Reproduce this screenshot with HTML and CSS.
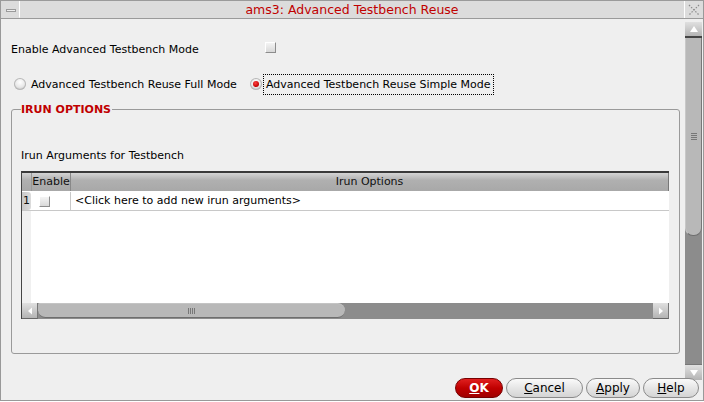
FILE: index.html
```html
<!DOCTYPE html>
<html>
<head>
<meta charset="utf-8">
<link rel="stylesheet" href="styles.css">
</head>
<body>
<div class="window">
  <div class="titlebar">
    <div class="tb-btn tb-menu"><span class="menu-bar"></span></div>
    <div class="title">ams3: Advanced Testbench Reuse</div>
    <div class="tb-btn tb-close">
      <svg width="14" height="14" viewBox="0 0 14 14"><path d="M2 2 L12 12 M12 2 L2 12" stroke="#8a8a8a" stroke-width="1.2" stroke-dasharray="1.5 1.5" fill="none"/></svg>
    </div>
  </div>
  <div class="middle">
    <div class="main">
      <div class="row row-enable">
        <span class="label">Enable Advanced Testbench Mode</span>
        <span class="check chk-main"></span>
      </div>
      <div class="row row-radio">
        <span class="radio"></span>
        <span class="label rl1">Advanced Testbench Reuse Full Mode</span>
        <span class="radio on"></span>
        <span class="label rl2 focus">Advanced Testbench Reuse Simple Mode</span>
      </div>
      <fieldset class="group">
        <legend>IRUN OPTIONS</legend>
        <div class="sub">Irun Arguments for Testbench</div>
        <div class="table">
          <div class="thead">
            <div class="rh corner"></div>
            <div class="th th-en">Enable</div>
            <div class="th th-opt">Irun Options</div>
          </div>
          <div class="trow">
            <div class="rh num">1</div>
            <div class="td td-en"><span class="check"></span></div>
            <div class="td td-opt">&lt;Click here to add new irun arguments&gt;</div>
          </div>
          <div class="tbody-empty">
            <div class="rh blank"></div>
            <div class="fill"></div>
          </div>
          <div class="hscroll">
            <div class="sbtn sbtn-left"><svg width="8" height="8" viewBox="0 0 8 8"><path d="M2 4 L6 0.5 L6 7.5 Z" fill="#fff"/></svg></div>
            <div class="hthumb"><span class="grip-h"></span></div>
            <div class="htrack"></div>
            <div class="sbtn sbtn-right"><svg width="8" height="8" viewBox="0 0 8 8"><path d="M6 4 L2 0.5 L2 7.5 Z" fill="#fff"/></svg></div>
          </div>
        </div>
      </fieldset>
    </div>
    <div class="vscroll">
      <div class="vbtn vbtn-up"><svg width="10" height="8" viewBox="0 0 10 8"><path d="M5 1 L9 7 L1 7 Z" fill="#fff"/></svg></div>
      <div class="vthumb"><span class="grip-v"></span></div>
      <div class="vtrack"></div>
      <div class="vbtn vbtn-down"><svg width="10" height="8" viewBox="0 0 10 8"><path d="M5 7 L9 1 L1 1 Z" fill="#fff"/></svg></div>
    </div>
  </div>
  <div class="footer">
    <button class="btn ok"><u>O</u>K</button>
    <button class="btn cancel"><u>C</u>ancel</button>
    <button class="btn apply"><u>A</u>pply</button>
    <button class="btn help"><u>H</u>elp</button>
  </div>
</div>
</body>
</html>
```
FILE: styles.css
```css
* { box-sizing: border-box; }
html, body { margin: 0; padding: 0; }
body {
  width: 704px;
  height: 402px;
  overflow: hidden;
  font-family: "DejaVu Sans", "Liberation Sans", sans-serif;
  font-size: 11px;
  color: #000;
  background: #fff;
}
.window {
  width: 704px;
  height: 401px;
  border: 1px solid #999;
  border-top: 1px solid #9a9a9a;
  background: #efefef;
  display: flex;
  flex-direction: column;
}
.titlebar {
  height: 18px;
  background: #dcdcdc;
  border-bottom: 1px solid #9a9a9a;
  display: flex;
  align-items: stretch;
  flex: none;
}
.tb-btn {
  width: 18px;
  flex: none;
  display: flex;
  align-items: center;
  justify-content: center;
}
.tb-menu {
  margin-left: 1px;
  border-right: 1px solid #fff;
  border-bottom: 1px solid #dcdcdc;
}
.menu-bar {
  width: 10px;
  height: 3px;
  border: 1px solid #9a9a9a;
  background: #eee;
  margin-top: 2px;
}
.tb-close {
  border-left: 1px solid #fff;
  margin-right: 1px;
}
.title {
  flex: 1;
  text-align: center;
  color: #c00000;
  font-size: 12.5px;
  line-height: 17px;
  padding-left: 0;
}
.middle {
  flex: none;
  height: 359px;
  display: flex;
}
.main {
  flex: 1;
  padding: 21px 5px 0 10px;
}
.row {
  display: flex;
  align-items: center;
  height: 18px;
}
.row-enable .label { width: 254px; }
.check {
  display: inline-block;
  width: 11px;
  height: 11px;
  border: 1px solid;
  border-color: #fff #8c8c8c #8c8c8c #fff;
  background: linear-gradient(#f4f4f4, #d8d8d8);
}
.chk-main { margin-top: -4px; }
.row-radio {
  margin-top: 16px;
  height: 20px;
}
.radio {
  width: 12px;
  height: 12px;
  border-radius: 50%;
  flex: none;
  background: radial-gradient(circle at 50% 35%, #ffffff 0%, #e8e8e8 50%, #a8a8a8 100%);
  box-shadow: inset 0 0 0 1px #b8b8b8;
  margin-left: 3px;
  margin-right: 5px;
  position: relative;
}
.radio.on::after {
  content: "";
  position: absolute;
  left: 3px; top: 3px;
  width: 6px; height: 6px;
  border-radius: 50%;
  background: radial-gradient(circle at 40% 35%, #ff4040, #c00000 70%);
}
.rl1 { margin-right: 10px; }
.rl2 { margin-left: -3px; }
.focus {
  outline: 1px dotted #000;
  padding: 2px 2px;
  line-height: 15px;
}
.group {
  margin: 9px 0 0 0;
  padding: 0 9px 0 9px;
  border: 1px solid #9a9a9a;
  border-radius: 3px;
  height: 251px;
  width: 669px;
}
.group legend {
  color: #c00000;
  font-weight: bold;
  font-size: 11px;
  padding: 0 1px 0 0;
  margin-left: 0;
  line-height: 13px;
}
.sub {
  margin-top: 32px;
  height: 16px;
  line-height: 16px;
}
.table {
  margin-top: 7px;
  width: 648px;
  height: 148px;
  background: #fff;
  border-left: 1px solid #444;
  border-top: 2px solid #3a3a3a;
  display: flex;
  flex-direction: column;
}
.thead {
  height: 19px;
  display: flex;
  flex: none;
  background: linear-gradient(#d4d4d4, #b0b0b0 40%, #a8a8a8);
  border-bottom: 1px solid #fff;
}
.rh {
  width: 9px;
  flex: none;
}
.corner { background: transparent; }
.th {
  line-height: 18px;
  color: #111;
}
.th-en {
  width: 40px;
  text-align: center;
  border-right: 1px solid #888;
  border-left: 1px solid #999;
}
.th-opt {
  flex: 1;
  text-align: center;
  border-right: 1px solid #777;
}
.trow {
  height: 19px;
  display: flex;
  flex: none;
  border-bottom: 1px solid #c8c8c8;
}
.num {
  background: linear-gradient(90deg, #c8c8c8, #dcdcdc);
  border-radius: 0 3px 3px 0;
  line-height: 18px;
  font-size: 11px;
  text-align: left;
  padding-left: 1px;
  color: #111;
}
.td { line-height: 18px; }
.td-en {
  width: 40px;
  border-right: 1px solid #c8c8c8;
  display: flex;
  align-items: center;
  padding-left: 8px;
}
.td-opt {
  flex: 1;
  padding-left: 4px;
}
.tbody-empty {
  flex: 1;
  display: flex;
}
.blank { background: #f0f0f0; }
.fill { flex: 1; background: #fff; }
.hscroll {
  height: 16px;
  flex: none;
  display: flex;
  background: #8c8c8c;
}
.sbtn {
  width: 16px;
  height: 16px;
  flex: none;
  background: linear-gradient(#e0e0e0, #b4b4b4);
  border-right: 1px solid #777;
  border-bottom: 1px solid #666;
  display: flex;
  align-items: center;
  justify-content: center;
}
.hthumb {
  width: 307px;
  flex: none;
  height: 15px;
  margin-top: 0;
  background: #b8b8b8;
  border-radius: 2px 8px 8px 8px;
  border-bottom: 1px solid #6e6e6e;
  border-top: 1px solid #c4c4c4;
  display: flex;
  align-items: center;
  justify-content: center;
}
.grip-h {
  width: 8px;
  height: 6px;
  background: repeating-linear-gradient(90deg, #777 0 1px, transparent 1px 2px);
}
.htrack { flex: 1; }
.vscroll {
  width: 17px;
  flex: none;
  margin: 3px 1px 0 0;
  height: 358px;
  background: #8c8c8c;
  display: flex;
  flex-direction: column;
}
.vbtn {
  height: 16px;
  flex: none;
  background: linear-gradient(#e0e0e0, #b4b4b4);
  display: flex;
  align-items: center;
  justify-content: center;
}
.vbtn-up { border-bottom: 2px solid #444; }
.vbtn-down { border-top: 1px solid #777; }
.vthumb {
  height: 198px;
  flex: none;
  background: #b8b8b8;
  border-radius: 0 0 8px 8px;
  border-left: 1px solid #c8c8c8;
  border-right: 1px solid #777;
  border-bottom: 1px solid #6e6e6e;
  display: flex;
  align-items: center;
  justify-content: center;
}
.grip-v {
  width: 6px;
  height: 8px;
  background: repeating-linear-gradient(180deg, #777 0 1px, transparent 1px 2px);
}
.vtrack { flex: 1; }
.footer {
  flex: 1;
  display: flex;
  justify-content: flex-end;
  align-items: flex-start;
  gap: 3px;
  padding-right: 4px;
  margin-top: 0;
}
.btn {
  height: 20px;
  border: 1px solid #8a8a8a;
  border-radius: 10px;
  background: linear-gradient(#fafafa, #e6e6e6 50%, #d4d4d4);
  font-family: "DejaVu Sans", "Liberation Sans", sans-serif;
  font-size: 12px;
  color: #000;
  padding: 0;
  line-height: 18px;
}
.btn u { text-decoration: underline; }
.ok {
  width: 48px;
  background: linear-gradient(#e02020, #c00000 50%, #a00000);
  border-color: #700;
  color: #fff;
  font-weight: bold;
}
.cancel { width: 77px; }
.apply { width: 54px; }
.help { width: 56px; }
```
